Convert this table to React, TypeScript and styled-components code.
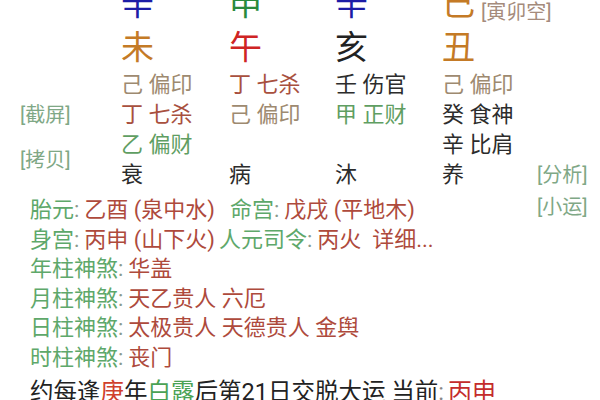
import React from 'react';
import styled, { createGlobalStyle } from 'styled-components';

const Global = createGlobalStyle`
  html, body { margin: 0; padding: 0; background: #fff; }
  body { font-family: Roboto, "Noto Sans CJK SC", sans-serif; overflow: hidden; }
`;

const C = {
  blue: '#1c1ca6',
  green: '#2a8a3c',
  earth: '#c47a26',
  fire: '#cf2424',
  black: '#222',
  tan: '#9e8a70',
  redBrown: '#a8503e',
  wood: '#5f9e62',
  dark: '#2c2c2c',
  label: '#5ea86a',
  value: '#ae4a3c',
  tag: '#7fa886',
  tagBrown: '#a58b7c',
};

const Page = styled.div`
  width: 600px;
  height: 400px;
  overflow: hidden;
  background: #fff;
`;

const Chart = styled.div`
  display: grid;
  grid-template-columns: 101px 108px 106px 107px 95px 1fr;
  grid-template-rows: 44px 44px 30px 30px 30px 29px;
  margin-top: -18px;
  padding-left: 20px;
`;

const Cell = styled.div<{ $col: number; $row: number; $span?: number }>`
  grid-column: ${(p) => p.$col};
  grid-row: ${(p) => p.$row} / span ${(p) => p.$span ?? 1};
  display: flex;
  align-items: center;
  white-space: nowrap;
`;

const BigChar = styled.span<{ $color: string }>`
  font-size: 33px;
  line-height: 44px;
  color: ${(p) => p.$color};
`;

const Hidden = styled.span<{ $color: string }>`
  font-size: 22px;
  line-height: 30px;
  color: ${(p) => p.$color};
`;

const Tag = styled.span<{ $color?: string }>`
  font-size: 20px;
  line-height: 24px;
  color: ${(p) => p.$color ?? C.tag};
`;

const EmptyTag = styled(Tag)`
  margin-left: 6px;
  align-self: flex-end;
  margin-bottom: 2px;
`;

const Info = styled.div`
  margin-top: 6px;
  padding-left: 30px;
  display: flex;
  flex-direction: column;
`;

const Line = styled.div`
  display: flex;
  align-items: center;
  font-size: 22px;
  line-height: 29.5px;
  white-space: nowrap;
`;

const Pair = styled.span<{ $width?: number }>`
  display: inline-block;
  ${(p) => (p.$width ? `width: ${p.$width}px;` : 'margin-right: 4px;')}
`;

const Label = styled.span`
  color: ${C.label};
`;

const Colon = styled.span`
  color: #8a9a8c;
  margin-right: 5px;
`;

const Value = styled.span`
  color: ${C.value};
`;

const Side = styled.span`
  margin-left: auto;
  width: 63px;
  display: flex;
  align-self: flex-start;
`;

const Footer = styled.div`
  margin-top: 4px;
  font-size: 23.5px;
  line-height: 32px;
  color: ${C.black};
  white-space: nowrap;
`;

const Hl = styled.span<{ $color: string }>`
  color: ${(p) => p.$color};
`;

const FootColon = styled.span`
  color: #888;
`;

const Current = styled.span`
  color: #c42c2c;
  font-size: 24px;
  margin-left: 4px;
`;

const stems = [
  { c: '辛', color: C.blue },
  { c: '申', color: C.green },
  { c: '辛', color: C.blue },
  { c: '己', color: C.earth },
];
const branches = [
  { c: '未', color: C.earth },
  { c: '午', color: C.fire },
  { c: '亥', color: C.black },
  { c: '丑', color: C.earth },
];
const hidden: { t: string; color: string }[][] = [
  [
    { t: '己 偏印', color: C.tan },
    { t: '丁 七杀', color: C.redBrown },
    { t: '乙 偏财', color: C.wood },
  ],
  [
    { t: '丁 七杀', color: C.redBrown },
    { t: '己 偏印', color: C.tan },
  ],
  [
    { t: '壬 伤官', color: C.dark },
    { t: '甲 正财', color: C.wood },
  ],
  [
    { t: '己 偏印', color: C.tan },
    { t: '癸 食神', color: C.dark },
    { t: '辛 比肩', color: C.dark },
  ],
];
const stages = ['衰', '病', '沐', '养'];

const shensha = [
  { k: '年柱神煞', v: '华盖' },
  { k: '月柱神煞', v: '天乙贵人 六厄' },
  { k: '日柱神煞', v: '太极贵人 天德贵人 金舆' },
  { k: '时柱神煞', v: '丧门' },
];

export default function App() {
  return (
    <Page>
      <Global />
      <Chart>
        {stems.map((s, i) => (
          <Cell key={'s' + i} $col={i + 2} $row={1}>
            <BigChar $color={s.color}>{s.c}</BigChar>
            {i === 3 && <EmptyTag $color={C.tagBrown}>[寅卯空]</EmptyTag>}
          </Cell>
        ))}
        {branches.map((s, i) => (
          <Cell key={'b' + i} $col={i + 2} $row={2}>
            <BigChar $color={s.color}>{s.c}</BigChar>
          </Cell>
        ))}
        {hidden.map((col, i) =>
          col.map((h, j) => (
            <Cell key={'h' + i + j} $col={i + 2} $row={j + 3}>
              <Hidden $color={h.color}>{h.t}</Hidden>
            </Cell>
          ))
        )}
        {stages.map((s, i) => (
          <Cell key={'g' + i} $col={i + 2} $row={6}>
            <Hidden $color={C.dark}>{s}</Hidden>
          </Cell>
        ))}
        <Cell $col={1} $row={4}>
          <Tag>[截屏]</Tag>
        </Cell>
        <Cell $col={1} $row={5} $span={2}>
          <Tag>[拷贝]</Tag>
        </Cell>
        <Cell $col={6} $row={6}>
          <Tag>[分析]</Tag>
        </Cell>
      </Chart>
      <Info>
        <Line>
          <Pair $width={200}>
            <Label>胎元</Label>
            <Colon>:</Colon>
            <Value>乙酉 (泉中水)</Value>
          </Pair>
          <Pair>
            <Label>命宫</Label>
            <Colon>:</Colon>
            <Value>戊戌 (平地木)</Value>
          </Pair>
          <Side>
            <Tag>[小运]</Tag>
          </Side>
        </Line>
        <Line>
          <Pair>
            <Label>身宫</Label>
            <Colon>:</Colon>
            <Value>丙申 (山下火)</Value>
          </Pair>
          <Pair>
            <Label>人元司令</Label>
            <Colon>:</Colon>
            <Value>丙火&nbsp; 详细...</Value>
          </Pair>
        </Line>
        {shensha.map((s) => (
          <Line key={s.k}>
            <Label>{s.k}</Label>
            <Colon>:</Colon>
            <Value>{s.v}</Value>
          </Line>
        ))}
        <Footer>
          约每逢<Hl $color="#d0402c">庚</Hl>年<Hl $color="#4aa254">白露</Hl>后第21日交脱大运 当前<FootColon>:</FootColon>
          <Current>丙申</Current>
        </Footer>
      </Info>
    </Page>
  );
}
